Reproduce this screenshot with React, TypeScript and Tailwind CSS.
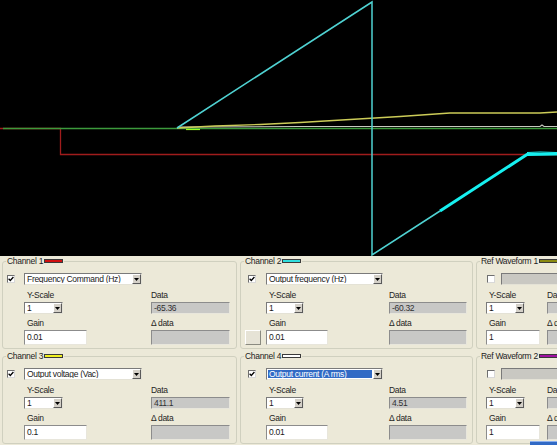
import React from "react";

// ── Scope trace ───────────────────────────────
function ScopeTrace() {
  return (
    <svg width={557} height={256} viewBox="0 0 557 256" className="block bg-black">
      {/* Channel 1 */}
      <polyline points="0,128.5 60.5,128.5 60.5,154.5 557,154.5" fill="none" stroke="#a01c1c" strokeWidth={1.3} />
      {/* baseline */}
      <line x1={3} y1={128.5} x2={557} y2={128.5} stroke="#3c9a3c" strokeWidth={1.4} />
      {/* Channel 4 */}
      <polyline points="178,127 300,126.5 540,126.5 542,125 544,126.5 557,126.5" fill="none" stroke="#c9c9c0" strokeWidth={1.1} />
      <line x1={186} y1={129.5} x2={200} y2={129.5} stroke="#9aff20" strokeWidth={1.2} />
      {/* Channel 3 */}
      <polyline points="177,128 215,126 260,124.5 300,122.5 350,119.5 400,116.5 450,113 540,113 557,112" fill="none" stroke="#cccc58" strokeWidth={1.3} />
      {/* Channel 2 */}
      <polyline points="177,128 372,2 372,255 440,211" fill="none" stroke="#4fd2d2" strokeWidth={1.5} />
      <polyline points="440,211 527,154.5 557,154" fill="none" stroke="#16f0f0" strokeWidth={3} />
      <polyline points="527,152.5 540,152 557,152.5" fill="none" stroke="#16f0f0" strokeWidth={1} />
    </svg>
  );
}

// ── Small controls ────────────────────────────
function CheckBox({ checked }: { checked: boolean }) {
  return (
    <div className="w-[8px] h-[8px] shrink-0 bg-white border border-t-[#6f6f6f] border-l-[#6f6f6f] border-b-[#d8d8d8] border-r-[#d8d8d8] flex items-center justify-center">
      {checked && (
        <svg width={6} height={6} viewBox="0 0 6 6">
          <path d="M0.6 2.8 L2.3 4.5 L5.4 1" fill="none" stroke="#000" strokeWidth={1.3} />
        </svg>
      )}
    </div>
  );
}

function DropArrow() {
  return (
    <div className="w-[9px] h-[10px] shrink-0 bg-[#d4d0c8] border border-t-white border-l-white border-b-[#5a5a5a] border-r-[#5a5a5a] flex items-center justify-center">
      <svg width={5} height={3} viewBox="0 0 5 3">
        <path d="M0 0 H5 L2.5 3 Z" fill="#000" />
      </svg>
    </div>
  );
}

function Combo({
  value,
  width,
  selected,
  disabled,
}: {
  value: string;
  width: string;
  selected?: boolean;
  disabled?: boolean;
}) {
  return (
    <div
      className={`${width} h-[12px] shrink-0 flex items-center border border-t-[#7a7a7a] border-l-[#7a7a7a] border-b-[#e4e2d6] border-r-[#e4e2d6] ${
        disabled ? "bg-[#c9c8c2]" : "bg-white"
      }`}
    >
      <div className="flex-1 h-full px-[1px] py-[1px] min-w-0">
        <div
          className={`h-full leading-[8px] pl-[1px] whitespace-nowrap overflow-hidden ${
            selected ? "bg-[#316ac5] text-white" : "text-[#1a1a1a]"
          }`}
        >
          {value}
        </div>
      </div>
      {!disabled && <DropArrow />}
    </div>
  );
}

function Field({ value, width, gray, tall }: { value: string; width: string; gray?: boolean; tall?: boolean }) {
  return (
    <div
      className={`${width} ${tall ? "h-[15px]" : "h-[12px]"} shrink-0 flex items-center pl-[2px] border border-t-[#8c8c8c] border-l-[#8c8c8c] border-b-[#e8e6dc] border-r-[#e8e6dc] whitespace-nowrap ${
        gray ? "bg-[#c8c8c6] text-[#303030]" : "bg-white text-[#1a1a1a]"
      }`}
    >
      {value}
    </div>
  );
}

// ── Group box ─────────────────────────────────
interface GroupProps {
  title: string;
  bar: string;
  width: string;
  checked: boolean;
  combo: string;
  comboWidth: string;
  comboSelected?: boolean;
  comboDisabled?: boolean;
  checkMl: string;
  comboMl: string;
  gutter: string;
  leftW: string;
  scaleW: string;
  gain: string;
  gainW: string;
  data: string;
  dataW: string;
  button?: boolean;
}

function Group(p: GroupProps) {
  return (
    <fieldset className={`${p.width} shrink-0 border border-[#d0d0bf] rounded-[3px] pb-[3px]`}>
      <legend className="ml-[3px] px-[1px] h-[10px] leading-[10px] text-[#222]">
        <span className="inline-flex items-center h-[10px] whitespace-nowrap">
          {p.title}
          <span className={`inline-block w-[19px] h-[4px] ml-[1px] border border-[#3a3a3a] ${p.bar}`} />
        </span>
      </legend>

      <div className="flex items-center mt-[7px] h-[12px]">
        <div className={p.checkMl}>
          <CheckBox checked={p.checked} />
        </div>
        <div className={p.comboMl}>
          <Combo value={p.combo} width={p.comboWidth} selected={p.comboSelected} disabled={p.comboDisabled} />
        </div>
      </div>

      <div className="flex mt-[5px]">
        <div className={`${p.gutter} shrink-0 flex flex-col justify-end`}>
          {p.button && (
            <div className="ml-[4px] w-[16px] h-[15px] bg-[#e6e3d6] border border-t-white border-l-white border-b-[#8a8a80] border-r-[#8a8a80]" />
          )}
        </div>
        <div className={`${p.leftW} shrink-0 flex flex-col`}>
          <div className="h-[10px] leading-[10px] pl-[3px]">Y-Scale</div>
          <div className="mt-[2px] flex">
            <Combo value="1" width={p.scaleW} />
          </div>
          <div className="mt-[4px] h-[10px] leading-[10px] pl-[3px]">Gain</div>
          <div className="mt-[2px] flex">
            <Field value={p.gain} width={p.gainW} tall />
          </div>
        </div>
        <div className="flex flex-col">
          <div className="h-[10px] leading-[10px] whitespace-nowrap">Data</div>
          <div className="mt-[2px] flex">
            <Field value={p.data} width={p.dataW} gray />
          </div>
          <div className="mt-[4px] h-[10px] leading-[10px] whitespace-nowrap">Δ data</div>
          <div className="mt-[2px] flex">
            <Field value="" width={p.dataW} gray tall />
          </div>
        </div>
      </div>
    </fieldset>
  );
}

const col1 = {
  width: "w-[235px]",
  checkMl: "ml-[4px]",
  comboMl: "ml-[9px]",
  comboWidth: "w-[118px]",
  gutter: "w-[21px]",
  leftW: "w-[127px]",
  scaleW: "w-[39px]",
  gainW: "w-[63px]",
  dataW: "w-[79px]",
};

const col2 = {
  width: "w-[233px]",
  checkMl: "ml-[7px]",
  comboMl: "ml-[10px]",
  comboWidth: "w-[117px]",
  gutter: "w-[25px]",
  leftW: "w-[123px]",
  scaleW: "w-[38px]",
  gainW: "w-[62px]",
  dataW: "w-[78px]",
};

const col3 = {
  width: "w-[200px]",
  checkMl: "ml-[10px]",
  comboMl: "ml-[6px]",
  comboWidth: "w-[90px]",
  gutter: "w-[9px]",
  leftW: "w-[61px]",
  scaleW: "w-[39px]",
  gainW: "w-[54px]",
  dataW: "w-[60px]",
};

export default function App() {
  return (
    <div className="relative w-[557px] h-[445px] overflow-hidden bg-[#ece9d8] font-['Liberation_Sans',Arial,sans-serif] text-[8.5px] tracking-[-0.3px] text-[#1e1e1e]">
      <ScopeTrace />

      <div className="flex flex-col gap-[2px] pl-[2px]">
        <div className="flex gap-[3px]">
          <Group {...col1} title="Channel 1" bar="bg-[#d01010]" checked combo="Frequency Command (Hz)" gain="0.01" data="-65.36" />
          <Group {...col2} title="Channel 2" bar="bg-[#30dede]" checked combo="Output frequency (Hz)" gain="0.01" data="-60.32" button />
          <Group {...col3} title="Ref Waveform 1" bar="bg-[#8a8a10]" checked={false} combo="" comboDisabled gain="1" data="" />
        </div>
        <div className="flex gap-[3px]">
          <Group {...col1} title="Channel 3" bar="bg-[#f0f020]" checked combo="Output voltage (Vac)" gain="0.1" data="411.1" />
          <Group {...col2} title="Channel 4" bar="bg-white" checked combo="Output current (A rms)" comboSelected gain="0.01" data="4.51" />
          <Group {...col3} title="Ref Waveform 2" bar="bg-[#a010a0]" checked={false} combo="" comboDisabled gain="1" data="" />
        </div>
      </div>

      {/* partly visible control at the lower right edge */}
      <div className="absolute left-[530px] top-[441px] w-[27px] h-[4px] bg-[#316ac5] border-t border-[#8cb0ee]" />
    </div>
  );
}
